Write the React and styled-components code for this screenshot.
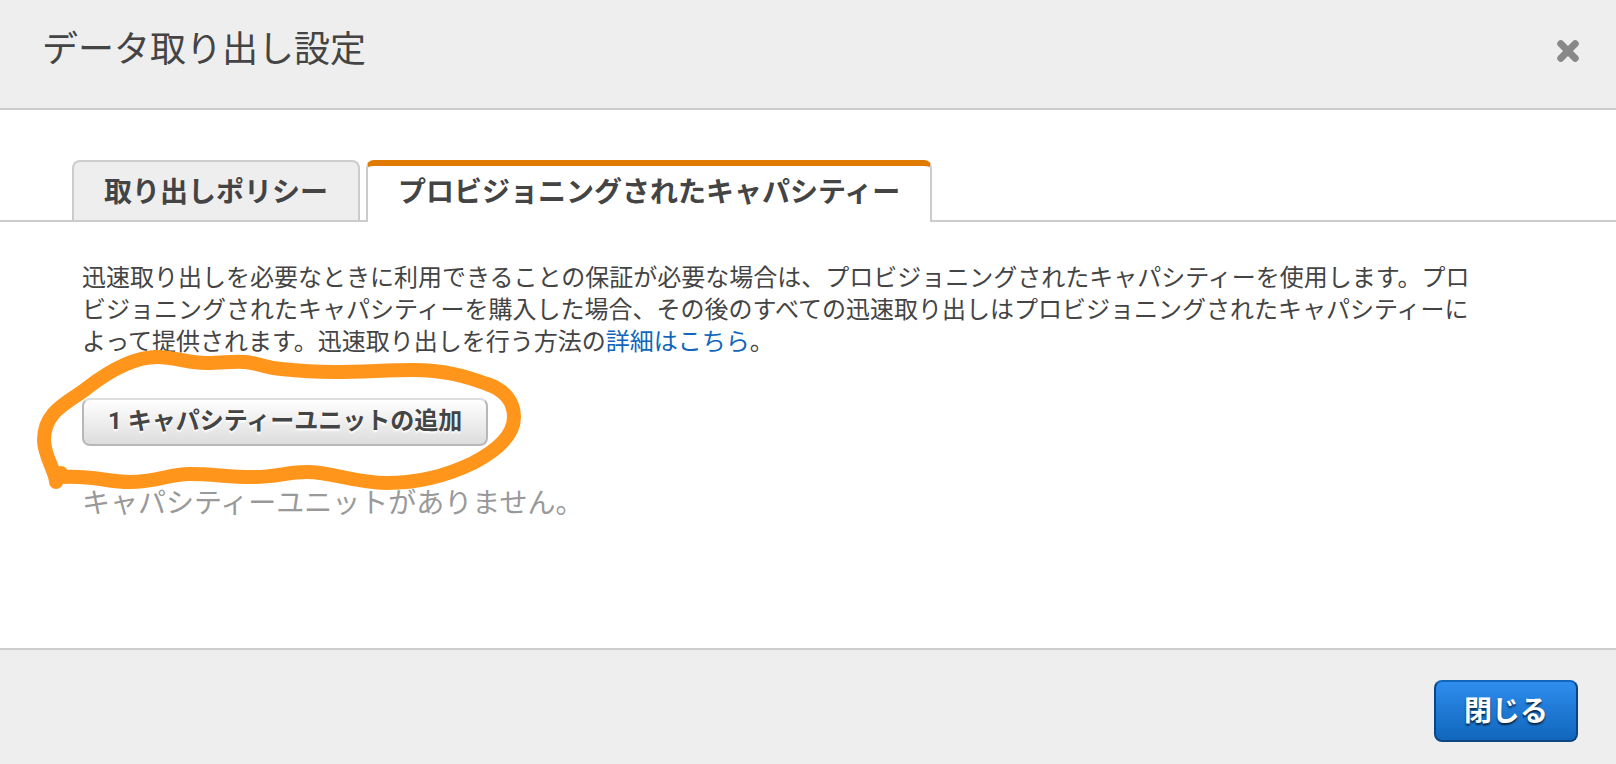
import React, { useState } from 'react';
import styled, { createGlobalStyle } from 'styled-components';

const GlobalStyle = createGlobalStyle`
  * {
    box-sizing: border-box;
  }

  body {
    margin: 0;
    background-color: #fff;
    color: #444;
    font-family: Roboto, 'Noto Sans CJK JP', sans-serif;
  }

  button {
    font-family: inherit;
    color: inherit;
    cursor: pointer;
  }
`;

const Dialog = styled.div`
  display: flex;
  flex-direction: column;
  min-height: 100vh;
`;

const Header = styled.header`
  display: flex;
  justify-content: space-between;
  align-items: flex-start;
  padding: 26px 36px 34px 42px;
  background-color: #eee;
  border-bottom: 2px solid #ccc;
`;

const Title = styled.h1`
  margin: 0;
  font-size: 36px;
  font-weight: 400;
  line-height: 48px;
`;

const CloseIconButton = styled.button`
  display: flex;
  margin-top: 14px;
  padding: 0;
  border: none;
  background: none;
`;

const Content = styled.main`
  flex: 1;
  padding-top: 50px;
`;

const TabList = styled.div`
  display: flex;
  gap: 6px;
  padding: 0 72px;
  border-bottom: 2px solid #ccc;
`;

const Tab = styled.button`
  height: ${({ $active }) => ($active ? '62px' : '60px')};
  margin-bottom: ${({ $active }) => ($active ? '-2px' : '0')};
  padding: ${({ $active }) => ($active ? '0 30px 2px' : '4px 30px 0')};
  border: 2px solid #ccc;
  border-top: ${({ $active }) => ($active ? '6px solid #e07b00' : '2px solid #ccc')};
  border-bottom: none;
  border-radius: 8px 8px 0 0;
  background-color: ${({ $active }) => ($active ? '#fff' : '#eee')};
  font-size: 28px;
  font-weight: 700;
  line-height: 40px;
`;

const Panel = styled.section`
  padding: 40px 132px 48px 82px;
`;

const Description = styled.p`
  margin: 0;
  font-size: 24px;
  line-height: 32px;
`;

const DetailLink = styled.a`
  color: #1166bb;
  text-decoration: none;
`;

const AddRow = styled.div`
  position: relative;
  display: flex;
  margin: 40px 0 38px;
`;

const AddButton = styled.button`
  height: 48px;
  padding: 0 24px 2px;
  border: 2px solid #b8b8b8;
  border-top-color: #ddd;
  border-radius: 8px;
  background: linear-gradient(#fff, #ddd);
  font-size: 24px;
  font-weight: 700;
  line-height: 32px;
  text-shadow: 0 2px 2px #fff;
`;

const Marker = styled.svg`
  position: absolute;
  top: -58px;
  left: -52px;
  pointer-events: none;
`;

const EmptyMessage = styled.p`
  margin: 0;
  color: #999;
  font-size: 28px;
  line-height: 40px;
`;

const Footer = styled.footer`
  display: flex;
  justify-content: flex-end;
  padding: 30px 38px 22px;
  background-color: #eee;
  border-top: 2px solid #ccc;
`;

const PrimaryButton = styled.button`
  height: 62px;
  padding: 2px 28px 0;
  border: 2px solid #0b4583;
  border-top-color: #1166bb;
  border-radius: 8px;
  background: linear-gradient(#2e8dee, #1166bb);
  color: #fff;
  font-size: 28px;
  font-weight: 700;
  line-height: 40px;
  text-shadow: 0 2px 2px rgba(0, 0, 0, 0.7);
`;

const tabs = ['取り出しポリシー', 'プロビジョニングされたキャパシティー'];

const App = () => {
  const [activeTab, setActiveTab] = useState(1);

  return (
    <>
      <GlobalStyle />
      <Dialog role="dialog" aria-labelledby="dialog-title">
        <Header>
          <Title id="dialog-title">データ取り出し設定</Title>
          <CloseIconButton aria-label="閉じる">
            <svg width="24" height="22" viewBox="0 0 24 22" fill="none">
              <path
                d="M5.2 4.2L18.8 17.8M18.8 4.2L5.2 17.8"
                stroke="#888"
                strokeWidth="5"
                strokeLinecap="square"
              />
              <path
                d="M4.8 3.8L19.2 18.2M19.2 3.8L4.8 18.2"
                stroke="#888"
                strokeWidth="7"
                strokeLinecap="round"
              />
            </svg>
          </CloseIconButton>
        </Header>
        <Content>
          <TabList role="tablist">
            {tabs.map((label, index) => (
              <Tab
                key={label}
                role="tab"
                aria-selected={index === activeTab}
                $active={index === activeTab}
                onClick={() => setActiveTab(index)}
              >
                {label}
              </Tab>
            ))}
          </TabList>
          <Panel role="tabpanel">
            <Description>
              迅速取り出しを必要なときに利用できることの保証が必要な場合は、プロビジョニングされたキャパシティーを使用します。プロビジョニングされたキャパシティーを購入した場合、その後のすべての迅速取り出しはプロビジョニングされたキャパシティーによって提供されます。迅速取り出しを行う方法の<DetailLink href="#">詳細はこちら</DetailLink>。
            </Description>
            <AddRow>
              <AddButton>1 キャパシティーユニットの追加</AddButton>
              <Marker width="510" height="160" viewBox="30 340 510 160" fill="none" aria-hidden="true">
                <path
                  d="M56 482C56 472 44 456 44 440C44 410 70 402 87 388C113 368 136 357 157 357C176 357 186 363 207 363C223 363 232 361 245 362C258 363 266 368 281 369C300 371 314 372 333 372C365 372 385 370 413 370C444 370 465 376 487 384C505 390 514 402 514 417C514 435 498 450 473 463C446 476 415 483 387 483C354 483 333 472 307 472C287 472 277 477 253 477C228 477 213 474 190 474C167 474 158 482 130 482C106 482 94 475 61 477"
                  stroke="#ff961b"
                  strokeWidth="14"
                  strokeLinecap="round"
                  strokeLinejoin="round"
                />
                <circle cx="61" cy="473" r="7" fill="#ff961b" />
              </Marker>
            </AddRow>
            <EmptyMessage>キャパシティーユニットがありません。</EmptyMessage>
          </Panel>
        </Content>
        <Footer>
          <PrimaryButton>閉じる</PrimaryButton>
        </Footer>
      </Dialog>
    </>
  );
};

export default App;
